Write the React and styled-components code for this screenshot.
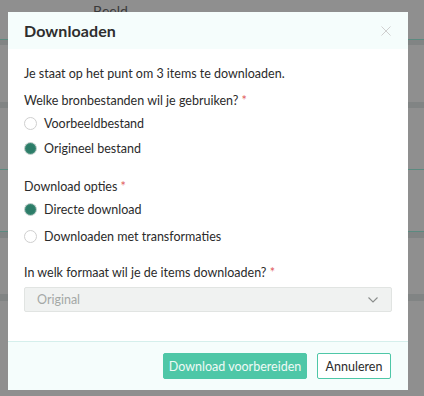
import React from "react";
import styled, { createGlobalStyle } from "styled-components";

const Global = createGlobalStyle`
  html, body { margin: 0; padding: 0; }
  body { font-family: Lato, "Noto Sans", sans-serif; background: #8f8f8f; }
`;

const Page = styled.div`
  width: 424px;
  height: 396px;
  overflow: hidden;
  background: #8f8f8f;
`;

const BgHeader = styled.div`
  height: 35px;
  padding-top: 4px;
  border-bottom: 1px solid #5b8a80;
  padding-left: 93px;
  box-sizing: content-box;
  font-size: 14px;
  color: #3a3a3a;
  line-height: 14px;
`;

const BgRow = styled.div`
  height: ${(p) => p.$h}px;
  box-sizing: border-box;
  border-top: ${(p) => p.$band}px solid #818484;
  border-bottom: ${(p) => (p.$teal ? "1px solid #5b8a80" : "none")};
`;

const Overlay = styled.div`
  position: fixed;
  inset: 0;
`;

const Modal = styled.div`
  position: absolute;
  left: 8px;
  top: 12px;
  width: 400px;
  height: 378px;
  background: #fff;
  display: flex;
  flex-direction: column;
`;

const Header = styled.div`
  height: 37px;
  background: #f5fdfc;
  display: flex;
  align-items: center;
  justify-content: space-between;
  padding: 0 17px 0 16px;
`;

const Title = styled.h2`
  margin: 0;
  font-size: 16px;
  font-weight: 700;
  color: #2e2e2e;
  letter-spacing: 0.1px;
`;

const CloseBtn = styled.button`
  border: none;
  background: none;
  padding: 0;
  width: 10px;
  height: 10px;
  display: flex;
  cursor: pointer;
`;

const Body = styled.div`
  flex: 1;
  padding: 16px 16px 0 16px;
  display: flex;
  flex-direction: column;
  color: #2b2b2b;
  font-size: 12.5px;
`;

const Intro = styled.p`
  margin: 0;
  line-height: 17px;
`;

const Group = styled.div`
  display: flex;
  flex-direction: column;
  margin-top: ${(p) => p.$mt}px;
`;

const Label = styled.div`
  line-height: 17px;
  margin-bottom: ${(p) => p.$mb || 6}px;
`;

const Req = styled.span`
  color: #e05a5a;
`;

const RadioRow = styled.label`
  display: flex;
  align-items: center;
  gap: 7px;
  height: 17px;
  margin-bottom: ${(p) => p.$mb || 0}px;
  line-height: 17px;
`;

const Circle = styled.span`
  width: 13px;
  height: 13px;
  box-sizing: border-box;
  border-radius: 50%;
  border: 1px solid ${(p) => (p.$on ? "#c9d3d0" : "#cfcfcf")};
  background: ${(p) => (p.$on ? "#2c7c68" : "#fff")};
  box-shadow: ${(p) => (p.$on ? "inset 0 0 0 1px #3d8a76" : "none")};
  flex: none;
`;

const Select = styled.div`
  height: 25px;
  box-sizing: border-box;
  border: 1px solid #e1e4e2;
  background: #f0f2f1;
  border-radius: 2px;
  display: flex;
  align-items: center;
  justify-content: space-between;
  padding: 0 12px;
  color: #a4a8a6;
`;

const Footer = styled.div`
  height: 49px;
  box-sizing: border-box;
  border-top: 1px solid #d5efec;
  background: #f5fdfc;
  display: flex;
  align-items: center;
  justify-content: flex-end;
  gap: 10px;
  padding: 0 17px 0 0;
`;

const Button = styled.button`
  height: 26px;
  box-sizing: border-box;
  padding: 0;
  white-space: nowrap;
  font-family: inherit;
  font-size: 12.5px;
  border-radius: 2px;
  border: 1px solid #4ec7a7;
  background: ${(p) => (p.$primary ? "#4ec7a7" : "#fff")};
  color: ${(p) => (p.$primary ? "#eefaf6" : "#2b2b2b")};
  width: ${(p) => p.$w}px;
  cursor: pointer;
`;

const Radio = ({ on, children, mb }) => (
  <RadioRow $mb={mb}>
    <Circle $on={on} />
    {children}
  </RadioRow>
);

export default function App() {
  return (
    <Page>
      <Global />
      <BgHeader>Beeld</BgHeader>
      <BgRow $h={62} $band={5} />
      <BgRow $h={68} $band={6} $teal />
      <BgRow $h={62} $band={0} $teal />
      <BgRow $h={62} $band={6} />
      <BgRow $h={62} $band={7} />
      <Overlay>
        <Modal>
          <Header>
            <Title>Downloaden</Title>
            <CloseBtn aria-label="Sluiten">
              <svg width="10" height="10" viewBox="0 0 10 10">
                <path d="M0.5 0.5 L9.5 9.5 M9.5 0.5 L0.5 9.5" stroke="#cfcfcf" strokeWidth="1" />
              </svg>
            </CloseBtn>
          </Header>
          <Body>
            <Intro>Je staat op het punt om 3 items te downloaden.</Intro>
            <Group $mt={10}>
              <Label>
                Welke bronbestanden wil je gebruiken? <Req>*</Req>
              </Label>
              <Radio mb={8}>Voorbeeldbestand</Radio>
              <Radio on>Origineel bestand</Radio>
            </Group>
            <Group $mt={21}>
              <Label>
                Download opties <Req>*</Req>
              </Label>
              <Radio on mb={10}>Directe download</Radio>
              <Radio>Downloaden met transformaties</Radio>
            </Group>
            <Group $mt={19}>
              <Label $mb={6}>
                In welk formaat wil je de items downloaden? <Req>*</Req>
              </Label>
              <Select>
                <span>Original</span>
                <svg width="12" height="8" viewBox="0 0 12 8">
                  <path d="M1.5 1.5 L6 6 L10.5 1.5" stroke="#8a8d8c" strokeWidth="1.1" fill="none" />
                </svg>
              </Select>
            </Group>
          </Body>
          <Footer>
            <Button $primary $w={144}>Download voorbereiden</Button>
            <Button $w={74}>Annuleren</Button>
          </Footer>
        </Modal>
      </Overlay>
    </Page>
  );
}
